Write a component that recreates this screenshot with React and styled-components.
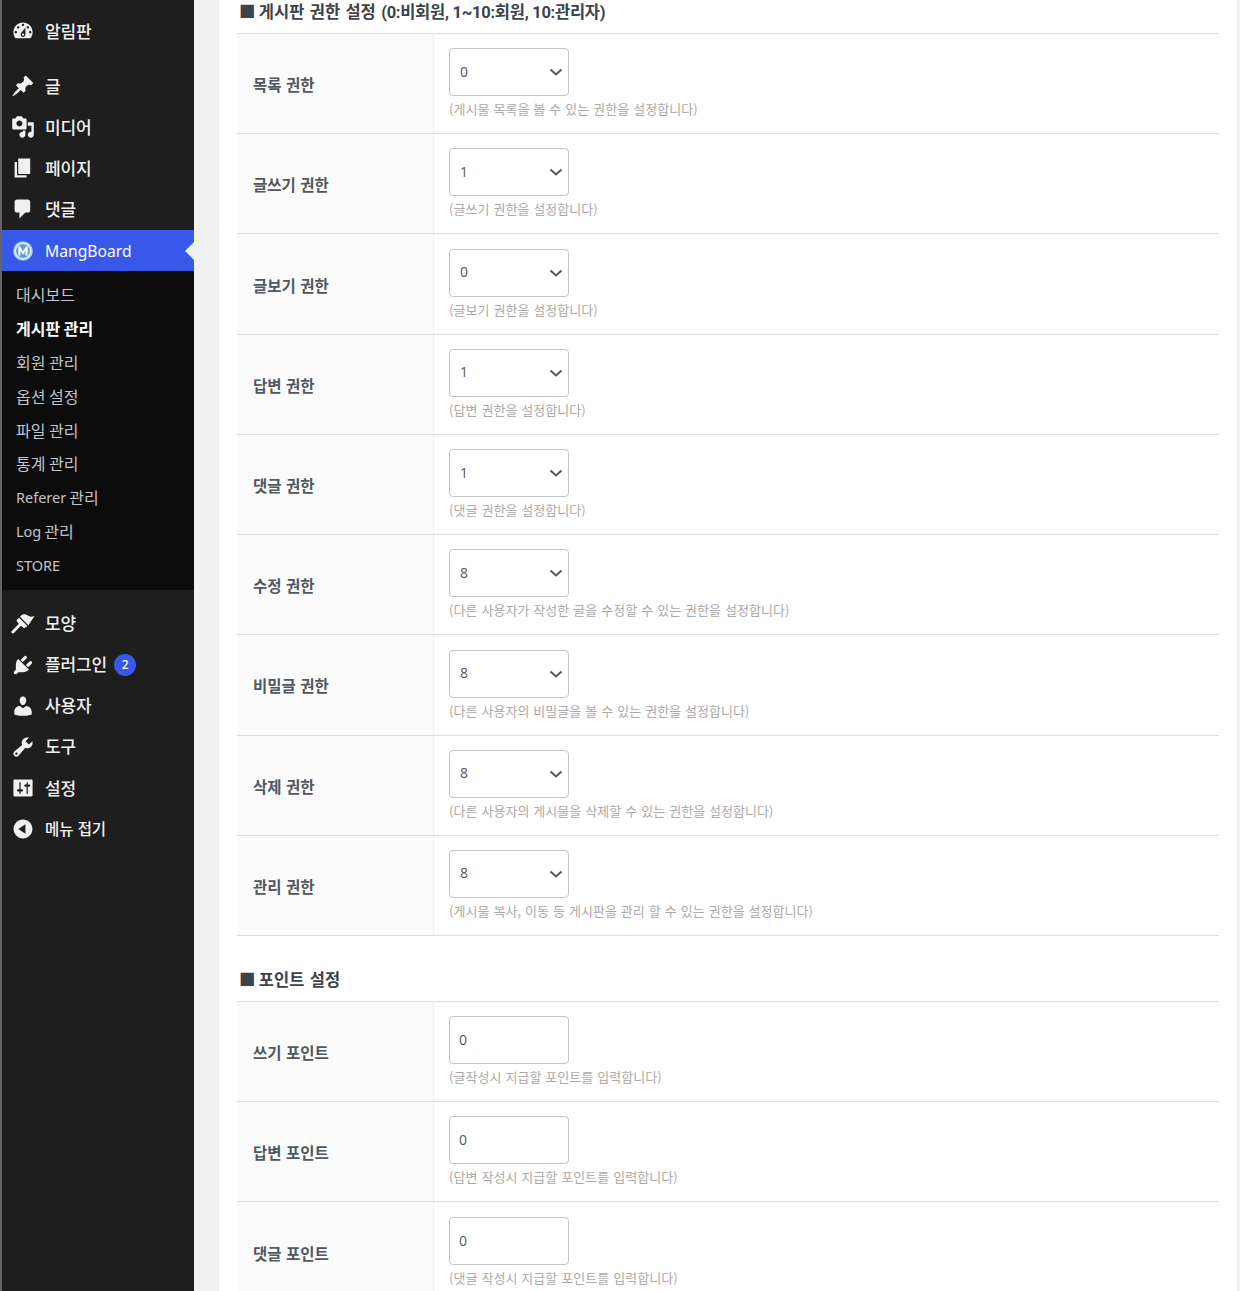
import React from "react";
import styled, { createGlobalStyle } from "styled-components";

const Global = createGlobalStyle`
  html, body { margin: 0; padding: 0; height: 1291px; overflow: hidden; background: #f0f0f1; }
  #root { height: 1291px; }
  * { box-sizing: border-box; }
`;
const FONT = `"Noto Sans CJK KR", "Noto Sans", sans-serif`;
const LATIN = `"Noto Sans", "Noto Sans CJK KR", sans-serif`;

const Page = styled.div`
  display: flex; height: 1291px; overflow: hidden; background: #f0f0f1; font-family: ${FONT};
  border-left: 2px solid #646464;
`;
const Sidebar = styled.nav`
  width: 192px; flex: none; background: #1e1e1e; padding-top: 10.5px;
`;
const Item = styled.a`
  position: relative; display: flex; align-items: center; height: 41.1px;
  margin-top: ${p => p.$gap || 0}px; padding-left: 9px; gap: 10px;
  color: ${p => p.$active ? "#fff" : "#f0f0f1"}; background: ${p => p.$active ? "#3858e9" : "transparent"};
  font-weight: 500; line-height: 1; white-space: nowrap;
  svg { flex: none; }
`;
const ItemText = styled.span`
  font-size: ${p => p.$small ? 15.5 : 17}px; padding-bottom: ${p => p.$small ? 0 : 2}px; letter-spacing: -0.1px; word-spacing: 1px;
`;
const BrandText = styled.span`
  font-family: ${LATIN}; font-size: 15.7px; font-weight: 400; padding-top: 2px;
`;
const Latin = styled.span`
  font-family: ${LATIN}; font-size: 14.5px; font-weight: 400;
`;
const Arrow = styled.span`
  position: absolute; right: 0; top: 50%; margin-top: -9px;
  border: 9px solid transparent; border-left: 0; border-right-color: #f0f0f1;
`;
const Badge = styled.span`
  display: inline-flex; align-items: center; justify-content: center;
  width: 22px; height: 22px; border-radius: 50%; background: #3858e9; color: #fff;
  font-family: ${LATIN}; font-size: 12px; margin-left: -3px;
`;
const Sub = styled.ul`
  list-style: none; margin: 0; padding: 6px 0 7.5px; background: #0c0c0c;
`;
const SubItem = styled.li`
  height: 33.9px; display: flex; align-items: center; gap: 3px; padding-left: 14px;
  font-size: 16px; color: ${p => p.$current ? "#fff" : "#c3c4c7"}; font-weight: ${p => p.$current ? 700 : 400};
`;
const Main = styled.main`
  margin-left: 25px; width: 1018px; flex: none; background: #fff; padding: 0 18px; height: 1291px; overflow: hidden;
`;
const Scroll = styled.div` margin-top: -10px; `;
const Heading = styled.h3`
  margin: ${p => p.$first ? 0 : "22px"} 0 0; height: 43px; line-height: 43px; padding-left: 2px;
  font-size: 16.5px; font-weight: 700; color: #3c434a; white-space: pre; word-spacing: 1.6px;
`;
const Square = styled.span` margin-right: -2px; `;
const HeadingNote = styled.span`
  font-family: "Roboto", "Noto Sans CJK KR", sans-serif; letter-spacing: -0.28px; word-spacing: 0;
`;
const Table = styled.div` border-top: 1px solid #ddd; `;
const Row = styled.div`
  display: grid; grid-template-columns: 197px 1fr; height: 100.22px; border-bottom: 1px solid #ddd;
`;
const Label = styled.div`
  background: #fbfbfb; border-right: 1px solid #f0f0f0; display: flex; align-items: center; padding: 1px 0 0 16px;
  font-size: 15.5px; font-weight: 700; color: #50575e; word-spacing: 1px;
`;
const Value = styled.div` padding: 14.2px 15px 0; `;
const fieldCss = `
  display: block; width: 120px; height: 48px; border: 1px solid #c3c4c7; border-radius: 4px; background-color: #fff;
  color: #50575e; font-family: "Open Sans", sans-serif; font-size: 14px; outline: none; margin: 0;
`;
const Select = styled.select`
  ${fieldCss}
  padding: 0 10px 2px;
  appearance: none;
  background-image: url("data:image/svg+xml,%3Csvg xmlns='http://www.w3.org/2000/svg' width='16' height='16' viewBox='0 0 16 16'%3E%3Cpath d='M2.5 5.5L8 10.5l5.5-5' fill='none' stroke='%2350575e' stroke-width='2'/%3E%3C/svg%3E");
  background-repeat: no-repeat; background-position: right 4.5px center;
`;
const Input = styled.input` ${fieldCss} padding: 0 9px 1px; `;
const Help = styled.div`
  margin-top: 4px; font-size: 13px; line-height: 18px; color: #aaa; white-space: nowrap;
  word-spacing: 1px; letter-spacing: 0.04px;
`;

const Icon = ({ d }) => (
  <svg width="24" height="24" viewBox="0 0 20 20" fill="#f0f0f1" fillRule="evenodd" aria-hidden="true"><path d={d} /></svg>
);
const ICONS = {
  dash: "M3.76 16h12.48c1.1-1.37 1.76-3.11 1.76-5 0-4.42-3.58-8-8-8s-8 3.58-8 8c0 1.89.66 3.63 1.76 5zM10 4c.55 0 1 .45 1 1s-.45 1-1 1-1-.45-1-1 .45-1 1-1zM6 6c.55 0 1 .45 1 1s-.45 1-1 1-1-.45-1-1 .45-1 1-1zm8 0c.55 0 1 .45 1 1s-.45 1-1 1-1-.45-1-1 .45-1 1-1zm-5.37 5.55L12 7v6c0 1.1-.9 2-2 2s-2-.9-2-2c0-.57.24-1.08.63-1.45zM4 10c.55 0 1 .45 1 1s-.45 1-1 1-1-.45-1-1 .45-1 1-1zm12 0c.55 0 1 .45 1 1s-.45 1-1 1-1-.45-1-1 .45-1 1-1zm-5 3c0-.55-.45-1-1-1s-1 .45-1 1 .45 1 1 1 1-.45 1-1z",
  post: "M10.44 3.02l1.82-1.82 6.36 6.35-1.83 1.82c-1.05-.68-2.48-.57-3.41.36l-.75.75c-.92.93-1.04 2.35-.35 3.41l-1.83 1.82-2.41-2.41-2.8 2.79c-.42.42-3.38 2.71-3.8 2.29s1.86-3.39 2.28-3.81l2.79-2.79L4.1 9.36l1.83-1.82c1.05.69 2.48.57 3.4-.36l.75-.75c.93-.92 1.05-2.35.36-3.41z",
  media: "M13 11V4c0-.55-.45-1-1-1h-1.67L9 1H5L3.67 3H2c-.55 0-1 .45-1 1v7c0 .55.45 1 1 1h10c.55 0 1-.45 1-1zM7 4.5c1.38 0 2.5 1.12 2.5 2.5S8.38 9.5 7 9.5 4.5 8.38 4.5 7 5.62 4.5 7 4.5zM14 6h5v10.5c0 1.38-1.12 2.5-2.5 2.5S14 17.88 14 16.5s1.12-2.5 2.5-2.5c.17 0 .34.02.5.05V9h-3V6zm-4 8.05V13h2v3.5c0 1.38-1.12 2.5-2.5 2.5S7 17.88 7 16.5 8.12 14 9.5 14c.17 0 .34.02.5.05z",
  page: "M6 15V2h10v13H6zm-1 1h8v2H3V5h2v11z",
  comment: "M5 2h9c1.1 0 2 .9 2 2v7c0 1.1-.9 2-2 2h-2l-5 5v-5H5c-1.1 0-2-.9-2-2V4c0-1.1.9-2 2-2z",
  brush: "M14.48 11.06L7.41 3.99l1.5-1.5c.5-.56 2.3-.8 3.8-.3 1.5.5 2 1 3.2 1.5 1.1.4 2.4.1 3.85-.6zM13.77 11.77L6.7 4.7 4.93 6.47c-.39.39-.39 1.02 0 1.41l1.06 1.06c.39.39.39 1.03 0 1.42L.7 15.8c-.5.6-.5 1.2 0 1.7s1.2.5 1.7 0l5.3-5.5c.39-.39 1.02-.39 1.41 0l1.06 1.06c.39.39 1.03.39 1.42 0z",
  plugin: "M13.11 4.36L9.87 7.6 8 5.73l3.24-3.24c.35-.34 1.05-.2 1.56.32.52.51.66 1.21.31 1.55zm-8 1.77l.91-1.12 9.01 9.01-1.19.84c-.71.71-2.63 1.16-3.82 1.16H6.14L4.9 17.26c-.59.59-1.54.59-2.12 0-.59-.58-.59-1.53 0-2.12l1.24-1.24v-3.88c0-1.13.4-3.19 1.09-3.89zm7.26 3.97l3.24-3.24c.34-.35 1.04-.21 1.55.31.52.51.66 1.21.31 1.55l-3.24 3.25z",
  users: "M10 9.25c-2.27 0-2.73-3.44-2.73-3.44C7 4.02 7.82 2 9.97 2c2.16 0 2.98 2.02 2.71 3.81 0 0-.41 3.44-2.68 3.44zm0 2.57L12.72 10c2.39 0 4.52 2.33 4.52 4.53v2.49s-3.65 1.13-7.24 1.13c-3.65 0-7.24-1.13-7.24-1.13v-2.49c0-2.25 1.94-4.48 4.47-4.48z",
  tools: "M16.68 9.77c-1.34 1.34-3.3 1.67-4.95.99l-5.41 6.52c-.99.99-2.59.99-3.58 0s-.99-2.59 0-3.57l6.52-5.42c-.68-1.65-.35-3.61.99-4.95 1.28-1.28 3.12-1.62 4.72-1.06l-2.89 2.89 2.82 2.82 2.86-2.87c.53 1.58.18 3.39-1.08 4.65zM3.81 16.21c.4.39 1.04.39 1.43 0 .4-.4.4-1.04 0-1.43-.39-.4-1.03-.4-1.43 0-.39.39-.39 1.03 0 1.43z",
  settings: "M18 16V4c0-.55-.45-1-1-1H3c-.55 0-1 .45-1 1v12c0 .55.45 1 1 1h14c.55 0 1-.45 1-1zM8 11h1c.55 0 1 .45 1 1s-.45 1-1 1H8v1.5c0 .28-.22.5-.5.5s-.5-.22-.5-.5V13H6c-.55 0-1-.45-1-1s.45-1 1-1h1V5.5c0-.28.22-.5.5-.5s.5.22.5.5V11zm5-2h-1c-.55 0-1-.45-1-1s.45-1 1-1h1V5.5c0-.28.22-.5.5-.5s.5.22.5.5V7h1c.55 0 1 .45 1 1s-.45 1-1 1h-1v5.5c0 .28-.22.5-.5.5s-.5-.22-.5-.5V9z",
  collapse: "M10 2.16c4.33 0 7.84 3.51 7.84 7.84s-3.51 7.84-7.84 7.84S2.16 14.33 2.16 10 5.71 2.16 10 2.16zm2 11.72V6.12L6.18 9.97z",
};
const MangLogo = () => (
  <svg width="24" height="24" viewBox="0 0 24 24" aria-hidden="true">
    <circle cx="12" cy="12" r="9.8" fill="#a9cdee" />
    <circle cx="12" cy="12" r="7.6" fill="#5f9fdc" stroke="#eaf3fb" strokeWidth="1.3" />
    <path d="M7.4 16.6V7.6h1.7l2.9 4.7 2.9-4.7h1.7v9h-2.1v-4.8l-2.5 3.9-2.5-3.9v4.8z" fill="#fff" />
  </svg>
);

const perms = [
  ["목록 권한", "0", "(게시물 목록을 볼 수 있는 권한을 설정합니다)"],
  ["글쓰기 권한", "1", "(글쓰기 권한을 설정합니다)"],
  ["글보기 권한", "0", "(글보기 권한을 설정합니다)"],
  ["답변 권한", "1", "(답변 권한을 설정합니다)"],
  ["댓글 권한", "1", "(댓글 권한을 설정합니다)"],
  ["수정 권한", "8", "(다른 사용자가 작성한 글을 수정할 수 있는 권한을 설정합니다)"],
  ["비밀글 권한", "8", "(다른 사용자의 비밀글을 볼 수 있는 권한을 설정합니다)"],
  ["삭제 권한", "8", "(다른 사용자의 게시물을 삭제할 수 있는 권한을 설정합니다)"],
  ["관리 권한", "8", "(게시물 복사, 이동 등 게시판을 관리 할 수 있는 권한을 설정합니다)"],
];
const points = [
  ["쓰기 포인트", "(글작성시 지급할 포인트를 입력합니다)"],
  ["답변 포인트", "(답변 작성시 지급할 포인트를 입력합니다)"],
  ["댓글 포인트", "(댓글 작성시 지급할 포인트를 입력합니다)"],
];
const levels = ["0", "1", "2", "3", "4", "5", "6", "7", "8", "9", "10"];

export default function App() {
  return (
    <Page>
      <Global />
      <Sidebar>
        <Item><Icon d={ICONS.dash} /><ItemText>알림판</ItemText></Item>
        <Item $gap={14}><Icon d={ICONS.post} /><ItemText>글</ItemText></Item>
        <Item><Icon d={ICONS.media} /><ItemText>미디어</ItemText></Item>
        <Item><Icon d={ICONS.page} /><ItemText>페이지</ItemText></Item>
        <Item><Icon d={ICONS.comment} /><ItemText>댓글</ItemText></Item>
        <Item $active><MangLogo /><BrandText>MangBoard</BrandText><Arrow /></Item>
        <Sub>
          <SubItem>대시보드</SubItem>
          <SubItem $current>게시판 관리</SubItem>
          <SubItem>회원 관리</SubItem>
          <SubItem>옵션 설정</SubItem>
          <SubItem>파일 관리</SubItem>
          <SubItem>통계 관리</SubItem>
          <SubItem><Latin>Referer</Latin>관리</SubItem>
          <SubItem><Latin>Log</Latin>관리</SubItem>
          <SubItem><Latin>STORE</Latin></SubItem>
        </Sub>
        <Item $gap={13.5}><Icon d={ICONS.brush} /><ItemText>모양</ItemText></Item>
        <Item><Icon d={ICONS.plugin} /><ItemText>플러그인</ItemText><Badge>2</Badge></Item>
        <Item><Icon d={ICONS.users} /><ItemText>사용자</ItemText></Item>
        <Item><Icon d={ICONS.tools} /><ItemText>도구</ItemText></Item>
        <Item><Icon d={ICONS.settings} /><ItemText>설정</ItemText></Item>
        <Item><Icon d={ICONS.collapse} /><ItemText $small>메뉴 접기</ItemText></Item>
      </Sidebar>
      <Main>
        <Scroll>
          <Heading $first><Square>■</Square> 게시판 권한 설정 <HeadingNote>(0:비회원, 1~10:회원, 10:관리자)</HeadingNote></Heading>
          <Table>
            {perms.map(([l, v, h]) => (
              <Row key={l}>
                <Label>{l}</Label>
                <Value>
                  <Select defaultValue={v}>{levels.map(o => <option key={o}>{o}</option>)}</Select>
                  <Help>{h}</Help>
                </Value>
              </Row>
            ))}
          </Table>
          <Heading><Square>■</Square> 포인트 설정</Heading>
          <Table>
            {points.map(([l, h]) => (
              <Row key={l}>
                <Label>{l}</Label>
                <Value>
                  <Input defaultValue="0" />
                  <Help>{h}</Help>
                </Value>
              </Row>
            ))}
          </Table>
        </Scroll>
      </Main>
    </Page>
  );
}
